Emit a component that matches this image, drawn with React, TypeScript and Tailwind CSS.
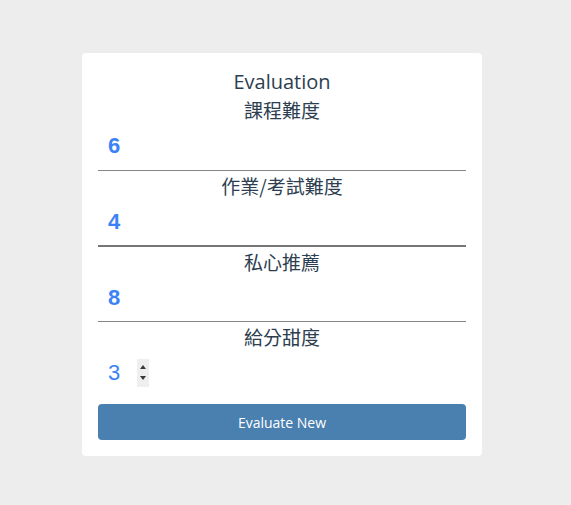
import React from 'react'

const fields = [
  { label: '課程難度', value: '6', border: 'border-b border-[#858585]', inputH: 'h-[45px]', weight: 'font-bold', spin: false },
  { label: '作業/考試難度', value: '4', border: 'border-b-2 border-[#767676]', inputH: 'h-[44px]', weight: 'font-bold', spin: false },
  { label: '私心推薦', value: '8', border: 'border-b border-[#858585]', inputH: 'h-[44px]', weight: 'font-bold', spin: false },
  { label: '給分甜度', value: '3', border: '', inputH: 'h-[44px]', weight: 'font-normal', spin: true },
]

function Spinner() {
  // native number input arrows
  return (
    <div className="ml-[17px] flex h-[28px] w-[12px] flex-col items-center justify-center gap-[7px] bg-[#efefef]">
      <div className="h-0 w-0 border-x-[3.5px] border-b-[4px] border-x-transparent border-b-[#3a3a3a]" />
      <div className="h-0 w-0 border-x-[3.5px] border-t-[4px] border-x-transparent border-t-[#3a3a3a]" />
    </div>
  )
}

export default function App() {
  return (
    <div className="min-h-[505px] w-full bg-[#ededed] pl-[82px] pt-[53px] font-['Open_Sans','Noto_Sans_CJK_TC',sans-serif]">
      <div className="h-[403px] w-[400px] rounded-[4px] bg-white px-4 pt-4">
        <h2 className="h-[26px] text-center text-[20px] leading-[26px] text-[#2c3e50]">Evaluation</h2>
        {fields.map((f) => (
          <div key={f.label} className={f.border}>
            <h3 className="h-[30px] text-center text-[19px] font-normal leading-[30px] text-[#2c3e50] font-['Noto_Sans_CJK_TC','Open_Sans',sans-serif]">
              {f.label}
            </h3>
            <div className={`flex items-center pb-[3px] pl-[10px] ${f.inputH}`}>
              <span
                className={`text-[22px] leading-none text-[#3b82f6] font-['Liberation_Sans',sans-serif] ${f.weight}`}
              >
                {f.value}
              </span>
              {f.spin && <Spinner />}
            </div>
          </div>
        ))}
        <button className="mt-2 h-[36px] w-full rounded-[4px] bg-[#4a80b0] text-[14px] text-white">
          Evaluate New
        </button>
      </div>
    </div>
  )
}
